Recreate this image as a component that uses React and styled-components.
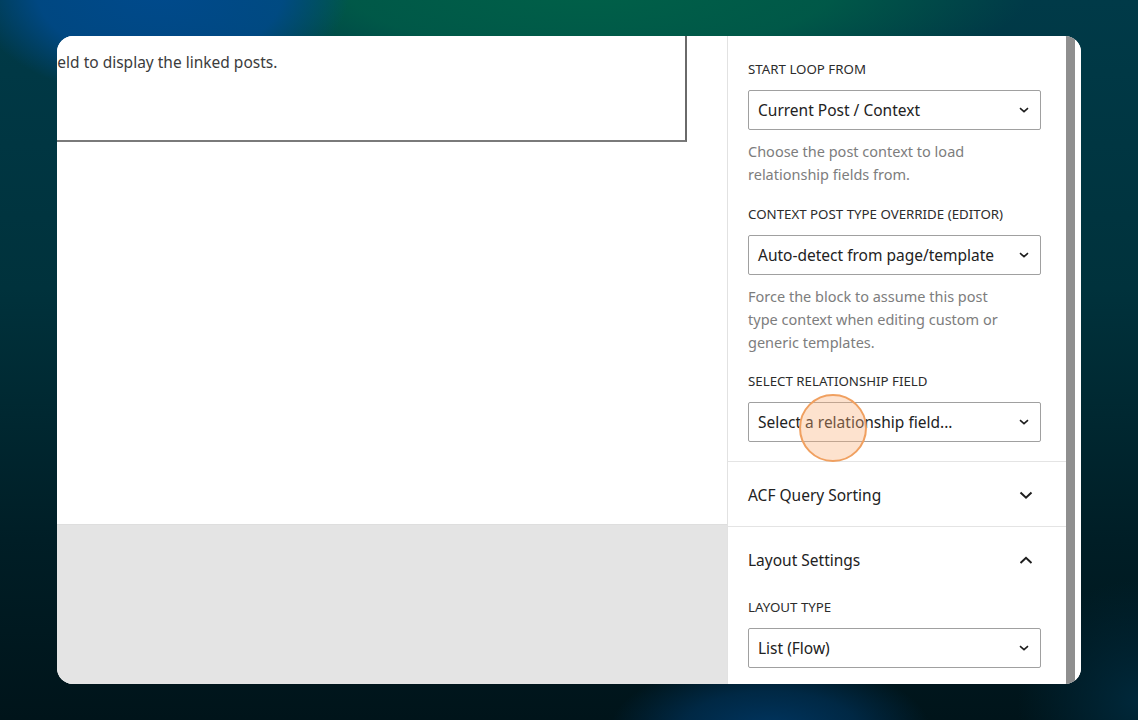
import React from "react";
import styled, { createGlobalStyle } from "styled-components";

const Global = createGlobalStyle`
  html, body { margin: 0; padding: 0; }
  body {
    width: 1138px;
    height: 720px;
    overflow: hidden;
    font-family: "Noto Sans", "Open Sans", sans-serif;
    background:
      radial-gradient(ellipse 190px 110px at 160px -10px, #004a8c 0%, rgba(0,74,140,0.85) 65%, rgba(0,74,140,0) 100%),
      radial-gradient(ellipse 440px 110px at 590px -10px, #006048 0%, rgba(0,96,72,0.8) 55%, rgba(0,96,72,0) 100%),
      radial-gradient(ellipse 160px 70px at 770px 730px, #003560 0%, rgba(0,53,96,0.6) 55%, rgba(0,53,96,0) 100%),
      radial-gradient(ellipse 120px 120px at 1138px 700px, #00283a 0%, rgba(0,40,58,0) 100%),
      linear-gradient(180deg, #003a48 0%, #00323c 40%, #001e26 75%, #00141a 100%);
  }
`;

const Card = styled.div`
  margin: 36px 57px 0 57px;
  width: 1024px;
  height: 648px;
  border-radius: 16px;
  overflow: hidden;
  background: #fff;
  display: flex;
`;

const Main = styled.div`
  width: 670px;
  display: flex;
  flex-direction: column;
  overflow: hidden;
`;

const Canvas = styled.div`
  flex: 1;
  background: #fff;
`;

const NoticeBox = styled.div`
  margin: -20px 0 0 -25px;
  width: 637px;
  height: 90px;
  padding: 34px 0 0 16px;
  border-right: 2px solid #6a6a6a;
  border-bottom: 2px solid #7a7a7a;
  font-size: 15.5px;
  color: #3c3c3c;
  line-height: 24px;
  white-space: nowrap;
`;

const GreyArea = styled.div`
  height: 159px;
  background: #e4e4e4;
  border-top: 1px solid #dedede;
`;

const Sidebar = styled.div`
  width: 338px;
  border-left: 1px solid #e2e2e2;
  display: flex;
  flex-direction: column;
  position: relative;
`;

const Scrollbar = styled.div`
  width: 9px;
  background: #8f8f8f;
`;

const RightEdge = styled.div`
  width: 6px;
  background: #fff;
`;

const PanelBody = styled.div`
  padding: ${(p) => p.$pt || 0}px 25px ${(p) => p.$pb || 0}px 20px;
  display: flex;
  flex-direction: column;
  border-bottom: ${(p) => (p.$divider ? "1px solid #e4e4e4" : "none")};
`;

const Field = styled.div`
  display: flex;
  flex-direction: column;
  margin-bottom: ${(p) => p.$mb || 0}px;
`;

const Label = styled.div`
  font-size: 13.3px;
  line-height: 15px;
  text-transform: uppercase;
  color: #2c2c2c;
  margin-bottom: 13px;
`;

const SelectBox = styled.div`
  height: 38px;
  border: 1px solid #a0a0a0;
  border-radius: 2px;
  display: flex;
  align-items: center;
  justify-content: space-between;
  padding: 0 10px 0 9px;
  font-size: 15.5px;
  color: #222;
`;

const Help = styled.div`
  margin-top: 10px;
  font-size: 14.5px;
  line-height: 23px;
  color: #7d7d7d;
  width: 250px;
`;

const PanelHeader = styled.div`
  box-sizing: border-box;
  height: ${(p) => (p.$divider ? 65 : 64)}px;
  display: flex;
  align-items: center;
  justify-content: space-between;
  padding: 2px 32px 0 20px;
  border-bottom: ${(p) => (p.$divider ? "1px solid #e4e4e4" : "none")};
  font-size: 15.5px;
  color: #222;
`;

const Cursor = styled.div`
  position: absolute;
  left: ${(p) => p.$x - 34}px;
  top: ${(p) => p.$y - 34}px;
  width: 64px;
  height: 64px;
  border-radius: 50%;
  border: 2px solid #f0a060;
  background: rgba(250, 175, 120, 0.36);
  pointer-events: none;
`;

const SmallChevron = () => (
  <svg width="12" height="8" viewBox="0 0 12 8">
    <path d="M2 2.2 L6 5.6 L10 2.2" fill="none" stroke="#1e1e1e" strokeWidth="1.6" />
  </svg>
);

const BigChevron = ({ up }) => (
  <svg width="16" height="10" viewBox="0 0 16 10">
    <path
      d={up ? "M2.5 8 L8 2.8 L13.5 8" : "M2.5 2.5 L8 7.7 L13.5 2.5"}
      fill="none"
      stroke="#1e1e1e"
      strokeWidth="2"
    />
  </svg>
);

const Select = ({ value }) => (
  <SelectBox>
    <span>{value}</span>
    <SmallChevron />
  </SelectBox>
);

export default function App() {
  return (
    <>
      <Global />
      <Card>
        <Main>
          <Canvas>
            <NoticeBox>field to display the linked posts.</NoticeBox>
          </Canvas>
          <GreyArea />
        </Main>
        <Sidebar>
          <PanelBody $pt={26} $pb={19} $divider>
            <Field $mb={21}>
              <Label>Start Loop From</Label>
              <Select value="Current Post / Context" />
              <Help>Choose the post context to load relationship fields from.</Help>
            </Field>
            <Field $mb={20}>
              <Label>Context Post Type Override (Editor)</Label>
              <Select value="Auto-detect from page/template" />
              <Help>
                Force the block to assume this post type context when editing custom or
                generic templates.
              </Help>
            </Field>
            <Field>
              <Label>Select Relationship Field</Label>
              <Select value="Select a relationship field..." />
            </Field>
          </PanelBody>
          <PanelHeader $divider>
            <span>ACF Query Sorting</span>
            <BigChevron />
          </PanelHeader>
          <PanelHeader>
            <span>Layout Settings</span>
            <BigChevron up />
          </PanelHeader>
          <PanelBody $pt={9}>
            <Field>
              <Label>Layout Type</Label>
              <Select value="List (Flow)" />
            </Field>
          </PanelBody>
          <Cursor $x={832 - 727} $y={428 - 36} />
        </Sidebar>
        <Scrollbar />
        <RightEdge />
      </Card>
    </>
  );
}
